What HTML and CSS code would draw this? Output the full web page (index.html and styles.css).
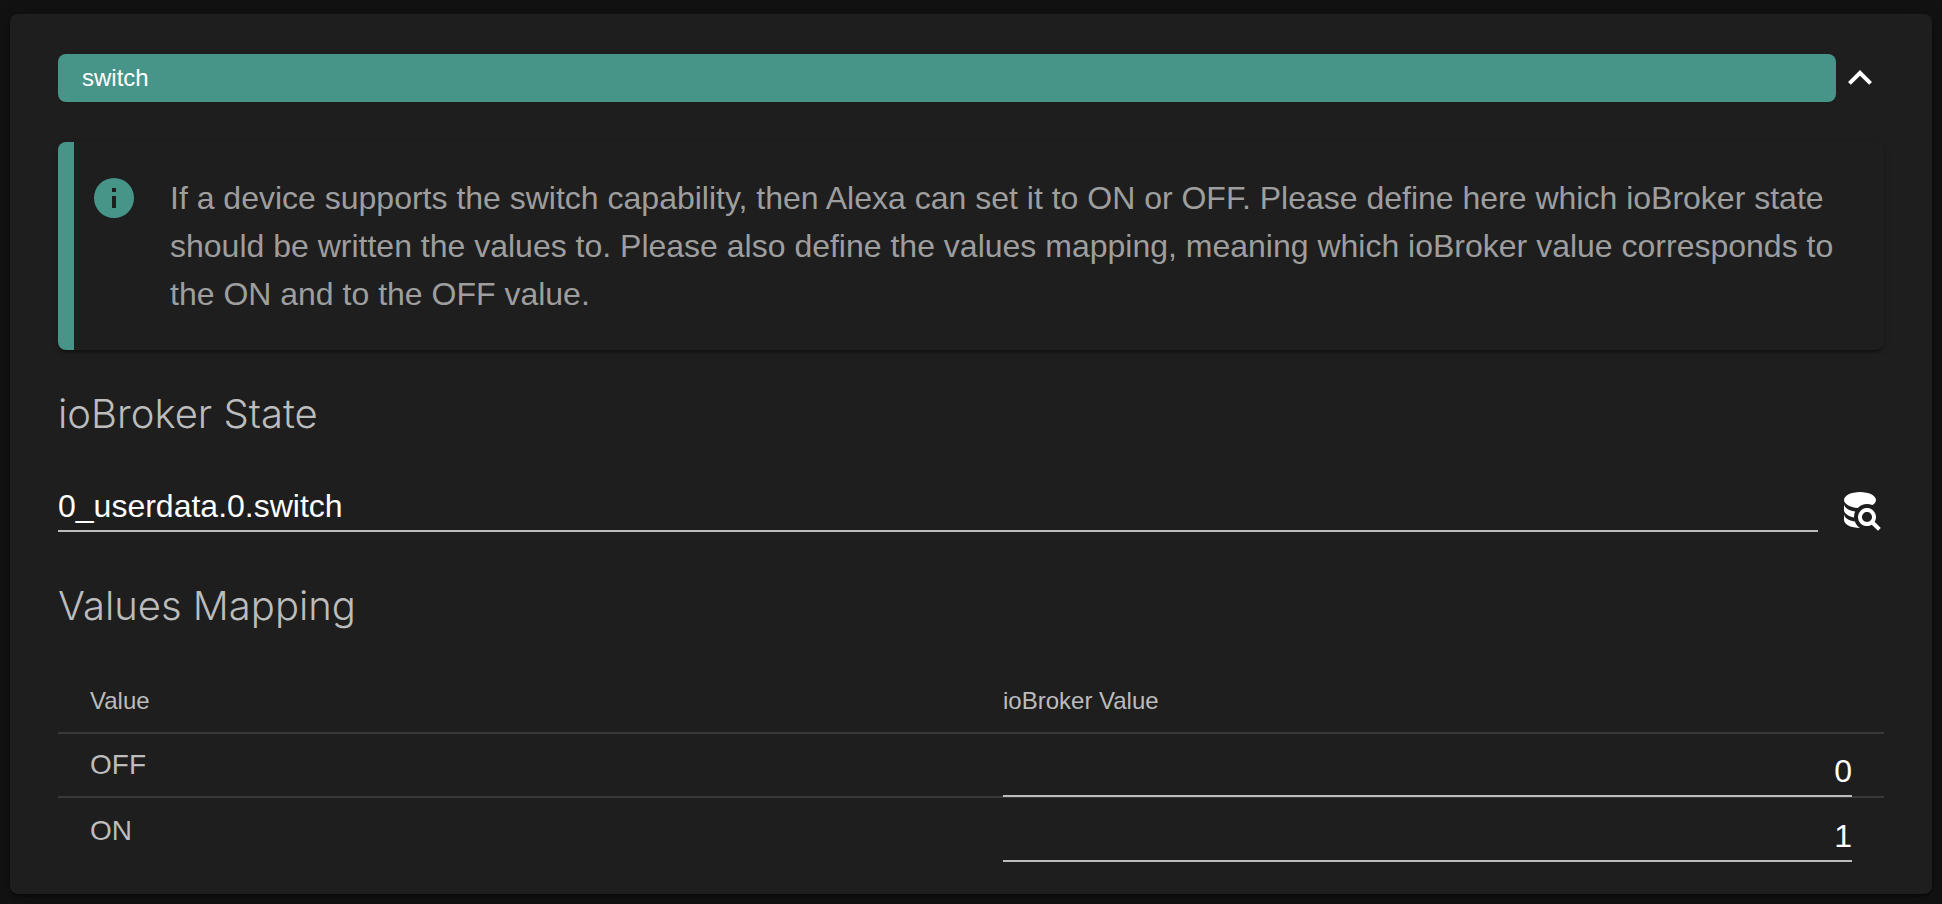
FILE: index.html
```html
<!DOCTYPE html>
<html lang="en">
<head>
<meta charset="utf-8">
<title>switch</title>
<link rel="stylesheet" href="styles.css">
</head>
<body>
<main class="card">
  <header class="card-header">
    <div class="capability">switch</div>
    <button class="icon-button" type="button" aria-label="Collapse">
      <svg class="icon" viewBox="0 0 24 24"><path d="M7.41 15.41 12 10.83l4.59 4.58L18 14l-6-6-6 6z"/></svg>
    </button>
  </header>

  <section class="notice">
    <svg class="icon notice-icon" viewBox="0 0 24 24"><path d="M13 9h-2V7h2m0 10h-2v-6h2M12 2A10 10 0 0 0 2 12a10 10 0 0 0 10 10 10 10 0 0 0 10-10A10 10 0 0 0 12 2z"/></svg>
    <p class="notice-text">If a device supports the switch capability, then Alexa can set it to ON or OFF. Please define here which ioBroker state should be written the values to. Please also define the values mapping, meaning which ioBroker value corresponds to the ON and to the OFF value.</p>
  </section>

  <h2 class="section-title"><label for="state">ioBroker State</label></h2>
  <div class="state-row">
    <input class="field" id="state" type="text" value="0_userdata.0.switch">
    <button class="icon-button" type="button" aria-label="Select state">
      <svg class="icon" viewBox="0 0 24 24"><path d="M18.68 12.32c-1.76-1.76-4.61-1.75-6.36.01-1.76 1.76-1.76 4.61 0 6.36 1.49 1.48 3.79 1.74 5.57.63L21 22.39 22.39 21l-3.09-3.11c1.13-1.77.87-4.09-.62-5.57m-1.41 4.95c-.98.98-2.56.97-3.54 0-.97-.98-.97-2.56.01-3.54.97-.97 2.55-.97 3.53 0 .97.98.97 2.56 0 3.54M10.9 20.1c-.65-.66-1.16-1.45-1.48-2.32C6.27 17.25 4 15.76 4 14v3c0 2.21 3.58 4 8 4-.4-.26-.77-.56-1.1-.9M4 9v3c0 1.68 2.07 3.12 5 3.7v-.2c0-.93.2-1.85.58-2.69C6.34 12.3 4 10.79 4 9m8-6C7.58 3 4 4.79 4 7c0 2 3 3.68 6.85 4h.05c1.2-1.26 2.86-2 4.6-2 .91 0 1.81.19 2.64.56A3.22 3.22 0 0 0 20 7c0-2.21-3.58-4-8-4z"/></svg>
    </button>
  </div>

  <h2 class="section-title">Values Mapping</h2>
  <table class="mapping">
    <thead>
      <tr><th scope="col">Value</th><th scope="col">ioBroker Value</th></tr>
    </thead>
    <tbody>
      <tr>
        <td><label for="off">OFF</label></td>
        <td class="field-cell"><input class="field field-number" id="off" type="text" value="0"></td>
      </tr>
      <tr>
        <td><label for="on">ON</label></td>
        <td class="field-cell"><input class="field field-number" id="on" type="text" value="1"></td>
      </tr>
    </tbody>
  </table>
</main>
</body>
</html>
```
FILE: styles.css
```css
* {
  box-sizing: border-box;
}

body {
  margin: 0;
  padding: 14px 10px 10px;
  background: #121212;
  color: #bcbcbc;
  font-family: "Liberation Sans", Arial, sans-serif;
}

.card {
  padding: 40px 48px 31px;
  border-radius: 8px;
  background: #1e1e1e;
  box-shadow: 0 4px 2px -2px rgba(0, 0, 0, 0.2), 0 2px 2px rgba(0, 0, 0, 0.14), 0 2px 16px rgba(0, 0, 0, 0.3);
}

.card-header {
  display: flex;
  margin-bottom: 40px;
}

.capability {
  flex: 1;
  padding: 0 24px;
  border-radius: 8px;
  background: #479488;
  color: #fff;
  font-size: 24px;
  line-height: 48px;
}

.icon-button {
  flex: none;
  width: 48px;
  height: 48px;
  padding: 0;
  border: 0;
  background: none;
  color: #fff;
}

.icon {
  display: block;
  width: 48px;
  height: 48px;
  fill: currentColor;
}

.notice {
  display: flex;
  gap: 32px;
  margin-bottom: 40px;
  padding: 32px 32px 32px 16px;
  border-left: 16px solid #479488;
  border-radius: 8px;
  box-shadow: 0 4px 2px -2px rgba(0, 0, 0, 0.2), 0 2px 2px rgba(0, 0, 0, 0.14), 0 2px 6px rgba(0, 0, 0, 0.12);
}

.notice-icon {
  flex: none;
  color: #479488;
}

.notice-text {
  margin: 0;
  color: #9e9e9e;
  font-size: 32px;
  line-height: 48px;
}

.section-title {
  margin: 0;
  font-family: Inter, "Liberation Sans", sans-serif;
  font-size: 40px;
  font-weight: 300;
  line-height: 48px;
}

.state-row {
  display: flex;
  gap: 18px;
  align-items: flex-end;
  margin: 46px 0 48px;
}

.field {
  display: block;
  flex: 1;
  width: 100%;
  min-width: 0;
  height: 48px;
  padding: 0 0 2px;
  border: 0;
  border-bottom: 2px solid #bcbcbc;
  border-radius: 0;
  outline: 0;
  background: none;
  color: #fff;
  font-family: inherit;
  font-size: 32px;
}

.state-row .field {
  margin-bottom: 2px;
}

.field-number {
  text-align: right;
}

.mapping {
  width: 100%;
  margin-top: 40px;
  border-spacing: 0;
  table-layout: fixed;
}

.mapping th,
.mapping td {
  height: 64px;
  padding: 0 32px 2px;
  box-shadow: inset 0 -2px #393939;
  text-align: left;
}

.mapping th {
  font-size: 24px;
  font-weight: 400;
}

.mapping td {
  font-size: 28px;
}

.mapping .field-cell {
  padding: 15px 32px 1px;
}

.mapping tr:last-child td {
  padding-top: 2px;
  box-shadow: none;
}

.mapping tr:last-child .field-cell {
  padding-top: 16px;
}

.mapping thead tr th {
  box-shadow: inset 0 -2px #393939;
}
```
